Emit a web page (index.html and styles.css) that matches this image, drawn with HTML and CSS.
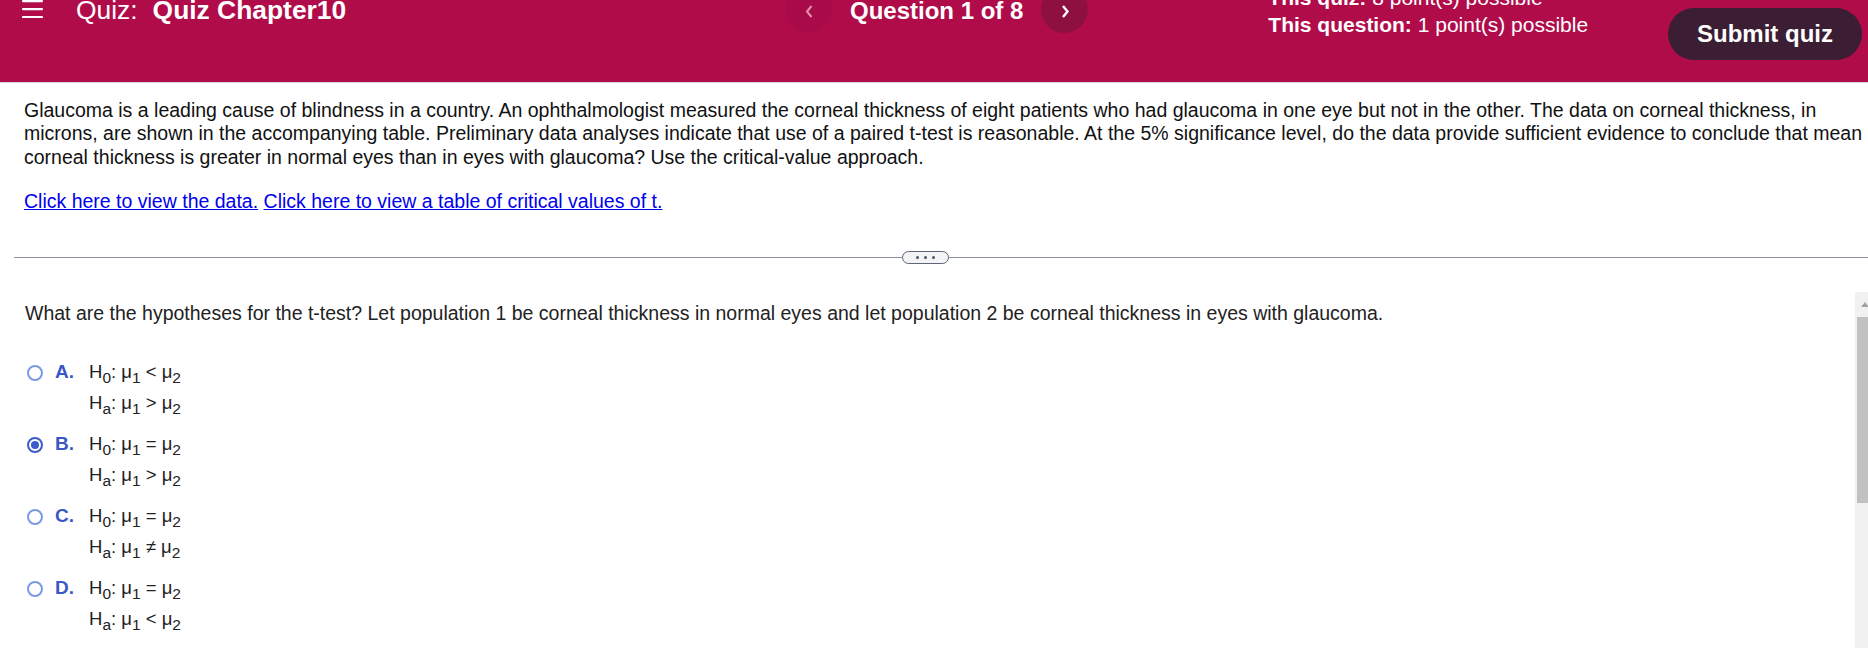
FILE: index.html
```html
<!DOCTYPE html>
<html lang="en">
<head>
<meta charset="utf-8">
<title>Quiz: Quiz Chapter10</title>
<link rel="stylesheet" href="styles.css">
</head>
<body>
<header class="topbar">
  <div class="topbar-row">
    <div class="brand">
      <button class="menu-btn" aria-label="Menu">
        <svg width="21" height="18" viewBox="0 0 21 18"><rect x="0" y="0" width="21" height="2.2" rx="1" fill="#fff"/><rect x="0" y="8" width="21" height="2.2" rx="1" fill="#fff"/><rect x="0" y="16" width="21" height="2.2" rx="1" fill="#fff"/></svg>
      </button>
      <h1 class="quiz-title"><span class="quiz-label">Quiz:</span><span class="quiz-name">Quiz Chapter10</span></h1>
    </div>
    <nav class="qnav">
      <span class="nav-btn prev"><svg width="10" height="14" viewBox="0 0 10 14"><polyline points="7.5,2 3,7.5 7.5,13" fill="none" stroke="#e690b2" stroke-width="2"/></svg></span>
      <span class="qcount">Question 1 of 8</span>
      <span class="nav-btn next"><svg width="10" height="14" viewBox="0 0 10 14"><polyline points="3,2 7.5,7.5 3,13" fill="none" stroke="#fff" stroke-width="2.4"/></svg></span>
    </nav>
    <div class="points">
      <div><b>This quiz:</b> 8 point(s) possible</div>
      <div><b>This question:</b> 1 point(s) possible</div>
    </div>
    <button class="submit">Submit quiz</button>
  </div>
</header>
<main class="content">
  <section class="stem">
    <p class="stem-text">Glaucoma is a leading cause of blindness in a country. An ophthalmologist measured the corneal thickness of eight patients who had glaucoma in one eye but not in the other. The data on corneal thickness, in microns, are shown in the accompanying table. Preliminary data analyses indicate that use of a paired t-test is reasonable. At the 5% significance level, do the data provide sufficient evidence to conclude that mean corneal thickness is greater in normal eyes than in eyes with glaucoma? Use the critical-value approach.</p>
    <p class="stem-links"><a href="#">Click here to view the data.</a> <a href="#">Click here to view a table of critical values of t.</a></p>
  </section>
  <div class="divider"><span class="line line-left"></span><span class="pill"><i></i><i></i><i></i></span><span class="line line-right"></span></div>
  <section class="pane">
    <div class="pane-body">
      <p class="prompt">What are the hypotheses for the t-test? Let population 1 be corneal thickness in normal eyes and let population 2 be corneal thickness in eyes with glaucoma.</p>
      <ul class="choices">
        <li class="choice"><span class="radio"></span><span class="letter">A.</span><div class="hyp"><div class="hl">H<sub>0</sub>: μ<sub>1</sub> &lt; μ<sub>2</sub></div><div class="hl">H<sub>a</sub>: μ<sub>1</sub> &gt; μ<sub>2</sub></div></div></li>
        <li class="choice"><span class="radio checked"></span><span class="letter">B.</span><div class="hyp"><div class="hl">H<sub>0</sub>: μ<sub>1</sub> = μ<sub>2</sub></div><div class="hl">H<sub>a</sub>: μ<sub>1</sub> &gt; μ<sub>2</sub></div></div></li>
        <li class="choice"><span class="radio"></span><span class="letter">C.</span><div class="hyp"><div class="hl">H<sub>0</sub>: μ<sub>1</sub> = μ<sub>2</sub></div><div class="hl">H<sub>a</sub>: μ<sub>1</sub> ≠ μ<sub>2</sub></div></div></li>
        <li class="choice"><span class="radio"></span><span class="letter">D.</span><div class="hyp"><div class="hl">H<sub>0</sub>: μ<sub>1</sub> = μ<sub>2</sub></div><div class="hl">H<sub>a</sub>: μ<sub>1</sub> &lt; μ<sub>2</sub></div></div></li>
      </ul>
    </div>
    <div class="scrollbar"><span class="arrow"></span><span class="thumb"></span></div>
  </section>
</main>
</body>
</html>
```
FILE: styles.css
```css
html, body {
  margin: 0;
  padding: 0;
}
body {
  width: 1868px;
  height: 648px;
  overflow: hidden;
  background: #fff;
  font-family: "Liberation Sans", Arial, sans-serif;
}

/* header */
.topbar {
  height: 82px;
  background: #b00c4a;
  border-bottom: 1px solid #d3d6dc;
  overflow: hidden;
  color: #fff;
}
.topbar-row {
  display: flex;
  align-items: flex-start;
}
.brand {
  width: 785px;
  display: flex;
  align-items: flex-start;
}
.menu-btn {
  margin: 0 0 0 22px;
  padding: 0;
  width: 21px;
  height: 18px;
  border: 0;
  background: none;
  display: block;
}
.menu-btn svg { display: block; }
.quiz-title {
  margin: 0 0 0 33px;
  display: flex;
  gap: 15px;
  font-size: 26.4px;
  line-height: 20px;
  font-weight: normal;
  white-space: nowrap;
}
.quiz-name { font-weight: bold; }

.qnav {
  display: flex;
  align-items: center;
  gap: 18px;
  margin-top: -14px;
}
.nav-btn {
  width: 47px;
  height: 47px;
  border-radius: 50%;
  display: flex;
  align-items: center;
  justify-content: center;
}
.nav-btn svg { display: block; margin-top: 2px; }
.prev { background: #a80b47; }
.next { background: #8e1041; }
.qcount {
  font-size: 24px;
  font-weight: bold;
  line-height: 28px;
  padding-top: 2px;
  white-space: nowrap;
}

.points {
  margin-left: 180px;
  margin-top: -16px;
  font-size: 21px;
  line-height: 27px;
  white-space: nowrap;
}
.submit {
  margin: 8px 6px 0 auto;
  width: 194px;
  height: 52px;
  border: 0;
  border-radius: 26px;
  background: #3b1e34;
  color: #fff;
  font-family: "Liberation Sans", Arial, sans-serif;
  font-size: 24px;
  font-weight: bold;
  padding: 0;
}

/* stem */
.stem {
  padding: 15.5px 0 0 24px;
}
.stem-text {
  margin: 0;
  font-size: 19.5px;
  line-height: 23.6px;
  color: #111;
}
.stem-links {
  margin: 20.5px 0 0;
  font-size: 19.5px;
  line-height: 23.6px;
}
.stem-links a { color: #0000ee; }

/* divider */
.divider {
  display: flex;
  align-items: center;
  height: 13px;
  margin: 37.5px 0 0 14px;
}
.line {
  height: 1px;
  background: #8a909d;
}
.line-left { width: 888px; }
.line-right { flex: 1; }
.pill {
  box-sizing: border-box;
  width: 47px;
  height: 13px;
  border: 1.5px solid #5c6675;
  border-radius: 7px;
  background: #f3f4f6;
  display: flex;
  align-items: center;
  justify-content: center;
  gap: 4.5px;
}
.pill i {
  width: 3.5px;
  height: 3.5px;
  border-radius: 50%;
  background: #4a5360;
}

/* answer pane */
.pane {
  display: flex;
  height: 356px;
  margin-top: 28px;
  overflow: hidden;
}
.pane-body {
  flex: 1;
  padding: 10px 0 0 25px;
}
.prompt {
  margin: 0;
  font-size: 19.5px;
  line-height: 23.6px;
  color: #222;
}
.choices {
  list-style: none;
  margin: 31px 0 0;
  padding: 0;
}
.choice {
  display: flex;
  align-items: flex-start;
  margin-bottom: 10px;
}
.radio {
  box-sizing: border-box;
  margin: 9px 0 0 2px;
  width: 16px;
  height: 16px;
  border: 2px solid #7b99e6;
  border-radius: 50%;
  display: flex;
  align-items: center;
  justify-content: center;
}
.radio.checked { border-color: #3d5bcc; }
.radio.checked::after {
  content: "";
  width: 8px;
  height: 8px;
  border-radius: 50%;
  background: #3d5bcc;
}
.letter {
  margin-left: 12px;
  width: 34px;
  font-size: 19px;
  font-weight: bold;
  line-height: 31px;
  color: #3a57c4;
}
.hyp {
  font-size: 18.5px;
  color: #222;
}
.hl {
  line-height: 31px;
  white-space: nowrap;
}
.hl sub {
  font-size: 15.5px;
  vertical-align: -4.5px;
  line-height: 0;
}

/* scrollbar */
.scrollbar {
  width: 13px;
  background: #f1f1f1;
  display: flex;
  flex-direction: column;
}
.arrow {
  width: 0;
  height: 0;
  margin: 10px 0 0 6px;
  border-left: 4px solid transparent;
  border-right: 4px solid transparent;
  border-bottom: 5px solid #a3a3a3;
}
.thumb {
  margin: 10px 0 0 2px;
  height: 186px;
  background: #c1c1c1;
}
```
